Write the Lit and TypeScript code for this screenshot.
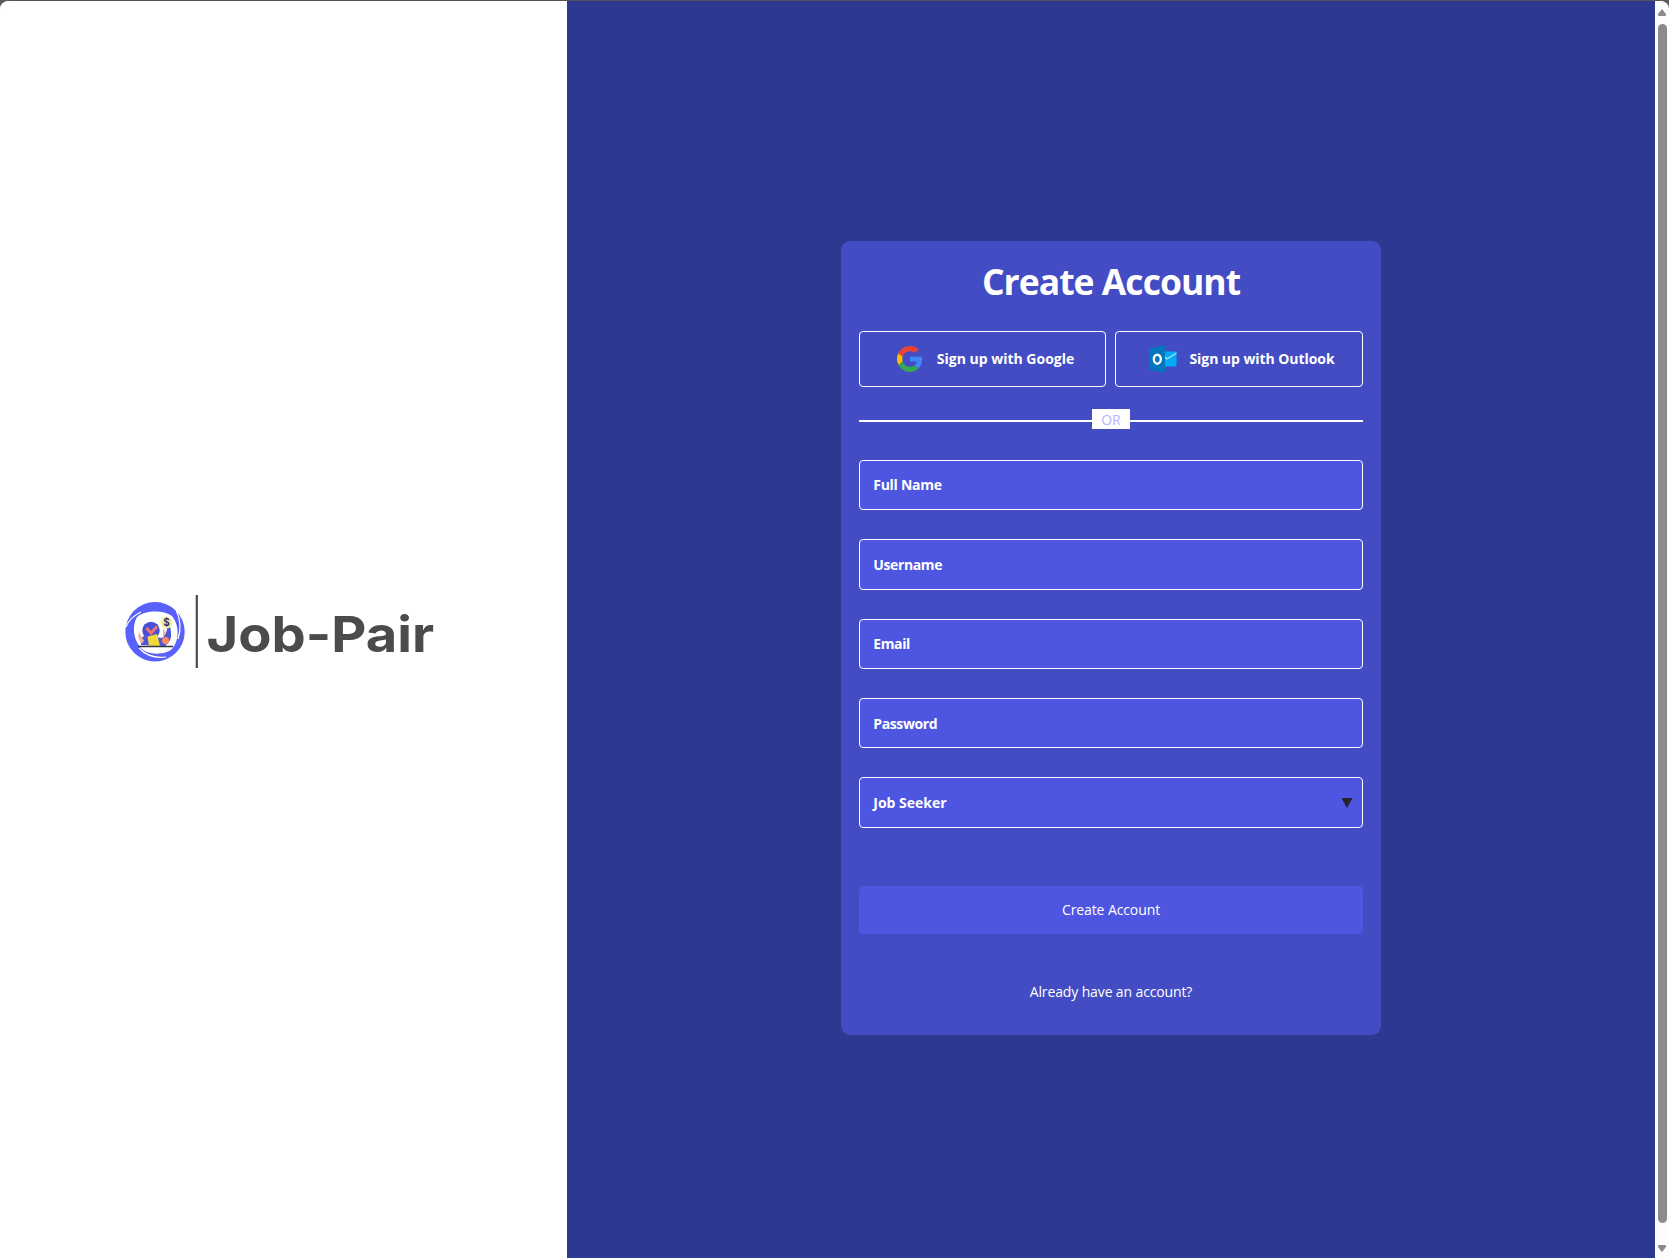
import { LitElement, html, svg, css } from "lit";
import { customElement } from "lit/decorators.js";

@customElement("brand-logo")
class BrandLogo extends LitElement {
  static styles = css`
    :host { display: block; width: 320px; height: 84px; }
    svg { display: block; }
    .name { font: 700 50px Inter, "Open Sans", sans-serif; fill: #4b4b4d; }
    .dollar { font: 700 10px Inter, sans-serif; fill: #27307a; }
  `;
  render() {
    return html`<svg width="320" height="84" viewBox="120 590 320 84">
      <circle cx="155" cy="631.800" r="29.700" fill="#5a60fb" />
      <path d="M137 617C146 610 163 610 172 616C180 626 179 641 172 649C165 655 147 656 140 647C133 638 132 626 137 617Z" fill="#fff" />
      <path d="M126 627Q130 617 141 612M176 610Q183 624 178 639M139 648Q149 659 166 657" fill="none" stroke="#fff" stroke-width="1.200" />
      <circle cx="151" cy="630.500" r="8.700" fill="#4a50d8" />
      <path d="M141 645V640Q142 635 148 636L162 638Q168 632 167 626L170 626Q173 639 168 643L165 646Z" fill="#5056d6" />
      <path d="M146.500 628L151 633L157 626.500" fill="none" stroke="#f2736c" stroke-width="3" />
      <path d="M147.500 636.500L157 634L160 646H149Z" fill="#f1d83c" />
      <circle cx="165.500" cy="640.500" r="3.500" fill="#ff8c62" />
      <path d="M139 632L144 641L141 644L138 637ZM163 628L166 633L163 638" fill="#f3b3a4" />
      <circle cx="166.500" cy="622.500" r="6" fill="#f3f19a" />
      <text class="dollar" x="163.300" y="626.300">$</text>
      <path d="M138 646.500H173" stroke="#33363d" stroke-width="1.300" />
      <path d="M196.800 595V668" stroke="#4b4b4d" stroke-width="2.200" />
      <text class="name" x="206.500" y="652" textLength="227.500" lengthAdjust="spacingAndGlyphs">Job-Pair</text>
    </svg>`;
  }
}

const googleIcon = svg`<svg width="26" height="26" viewBox="0 0 48 48">
  <path fill="#4285f4" d="M46.500 24.500c0-1.600-.1-3.100-.4-4.500H24v8.500h12.700c-.6 3-2.300 5.500-4.800 7.200l7.700 6c4.500-4.200 6.900-10.300 6.900-17.200z"/>
  <path fill="#34a853" d="M24 48c6.500 0 11.900-2.100 15.600-5.800l-7.700-6c-2.100 1.500-4.900 2.300-7.900 2.300-6.300 0-11.600-4.200-13.500-9.900l-7.900 6.100C6.500 42.600 14.600 48 24 48z"/>
  <path fill="#fbbc05" d="M10.500 28.600A14.400 14.400 0 0 1 10.500 19.400L2.600 13.200a24 24 0 0 0 0 21.500z"/>
  <path fill="#ea4335" d="M24 9.500c3.500 0 6.700 1.200 9.200 3.600l6.900-6.900A23.500 23.500 0 0 0 24 0C14.600 0 6.500 5.400 2.600 13.200l7.900 6.200C12.400 13.700 17.700 9.500 24 9.500z"/>
</svg>`;

const outlookIcon = svg`<svg width="28" height="28" viewBox="0 0 28 28">
  <path fill="#03a9f4" d="M15 6.500H26.500Q27.500 6.500 27.500 7.500V20.500Q27.500 21.500 26.500 21.500H15Z"/>
  <path d="M15.500 11.500L18 14L27.500 8" fill="none" stroke="#b3e5fc" stroke-width="1.300"/>
  <path fill="#0277bd" d="M0 3L16 .5V27.500L0 24.700Z"/>
  <ellipse cx="8.300" cy="14.200" rx="3.500" ry="4.500" fill="none" stroke="#fff" stroke-width="2.400"/>
</svg>`;

@customElement("app-root")
class AppRoot extends LitElement {
  static styles = css`
    :host { display: block; height: 1258px; background: #5c5960; font-family: "Open Sans", "Noto Sans", sans-serif; color: #fff; }
    * { box-sizing: border-box; }
    .window { display: grid; grid-template-columns: 567px 1088px 14px; height: 1258px; border-top: 1px solid #555258; border-radius: 9px 9px 0 0; overflow: hidden; background: #fff; }
    .brand { background: #fff; padding: 589px 0 0 120px; }
    .main { background: #2d3990; padding: 240px 0 0 274px; }
    .card { width: 540px; height: 794px; border-radius: 9px; background: #444cc4; padding: 18px; }
    h1 { margin: 0; height: 72px; font-size: 35.500px; line-height: 45px; font-weight: 700; text-align: center; letter-spacing: -.97px; white-space: nowrap; }
    .social { display: grid; grid-template-columns: 247px 248px; gap: 9px; height: 56px; }
    .social button { display: flex; align-items: center; justify-content: center; border: 1px solid #fff; border-radius: 4px; background: none; color: #fff; font: 700 14px "Open Sans", sans-serif; padding: 0 0 1px 6px; white-space: nowrap; }
    .google { gap: 14px; }
    .outlook { gap: 12px; letter-spacing: -.06px; }
    .social svg { display: block; }
    .or { display: flex; align-items: center; height: 20px; margin: 22px 0 30.800px; }
    .rule { flex: 1; height: 2px; background: #fff; margin-top: 4px; }
    .or span { width: 38px; height: 20px; background: #fff; color: #b4b4ff; font-size: 14px; line-height: 21px; text-align: center; }
    .fields { display: grid; gap: 28.900px; }
    .field { display: flex; justify-content: space-between; align-items: center; height: 50.500px; border: 1px solid #fff; border-radius: 4px; background: #4d55e1; padding: 0 9px 0 13.300px; font-size: 14px; font-weight: 700; letter-spacing: -.38px; }
    .field:first-child { padding-bottom: 1px; letter-spacing: -.28px; }
    .select { letter-spacing: 0; }
    .select svg { margin-top: 1px; }
    .create { display: block; width: 504px; height: 48px; margin: 57.800px 0 0; border: 0; border-radius: 4px; background: #4d55e1; color: #fff; font: 400 14px "Open Sans", sans-serif; letter-spacing: -.1px; padding: 0; }
    .login { margin: 48px 0 0; text-align: center; font-size: 14px; line-height: 20px; letter-spacing: -.13px; }
    .scroll { background: #fcfcfc; display: flex; flex-direction: column; align-items: center; padding: 8px 1px 5px 1px; }
    .thumb { width: 9px; height: 1199px; border-radius: 5px; background: #8b8b8b; margin: 8px 0 22px; }
  `;
  render() {
    return html`<div class="window">
      <div class="brand"><brand-logo></brand-logo></div>
      <main class="main">
        <div class="card">
          <h1>Create Account</h1>
          <div class="social">
            <button class="google">${googleIcon}<span>Sign up with Google</span></button>
            <button class="outlook">${outlookIcon}<span>Sign up with Outlook</span></button>
          </div>
          <div class="or"><i class="rule"></i><span>OR</span><i class="rule"></i></div>
          <div class="fields">
            ${["Full Name", "Username", "Email", "Password"].map((name) => html`<div class="field"><span>${name}</span></div>`)}
            <div class="field select"><span>Job Seeker</span><svg width="12" height="10"><path d="M.5 0H11.500L6 10Z" fill="#222529"/></svg></div>
          </div>
          <button class="create">Create Account</button>
          <p class="login">Already have an account?</p>
        </div>
      </main>
      <div class="scroll">
        <svg width="10" height="7"><path d="M5 0L9 5Q9.500 7 8 7H2Q.5 7 1 5Z" fill="#8b8b8b"/></svg>
        <div class="thumb"></div>
        <svg width="10" height="7"><path d="M5 7L9 2Q9.500 0 8 0H2Q.5 0 1 2Z" fill="#8b8b8b"/></svg>
      </div>
    </div>`;
  }
}
